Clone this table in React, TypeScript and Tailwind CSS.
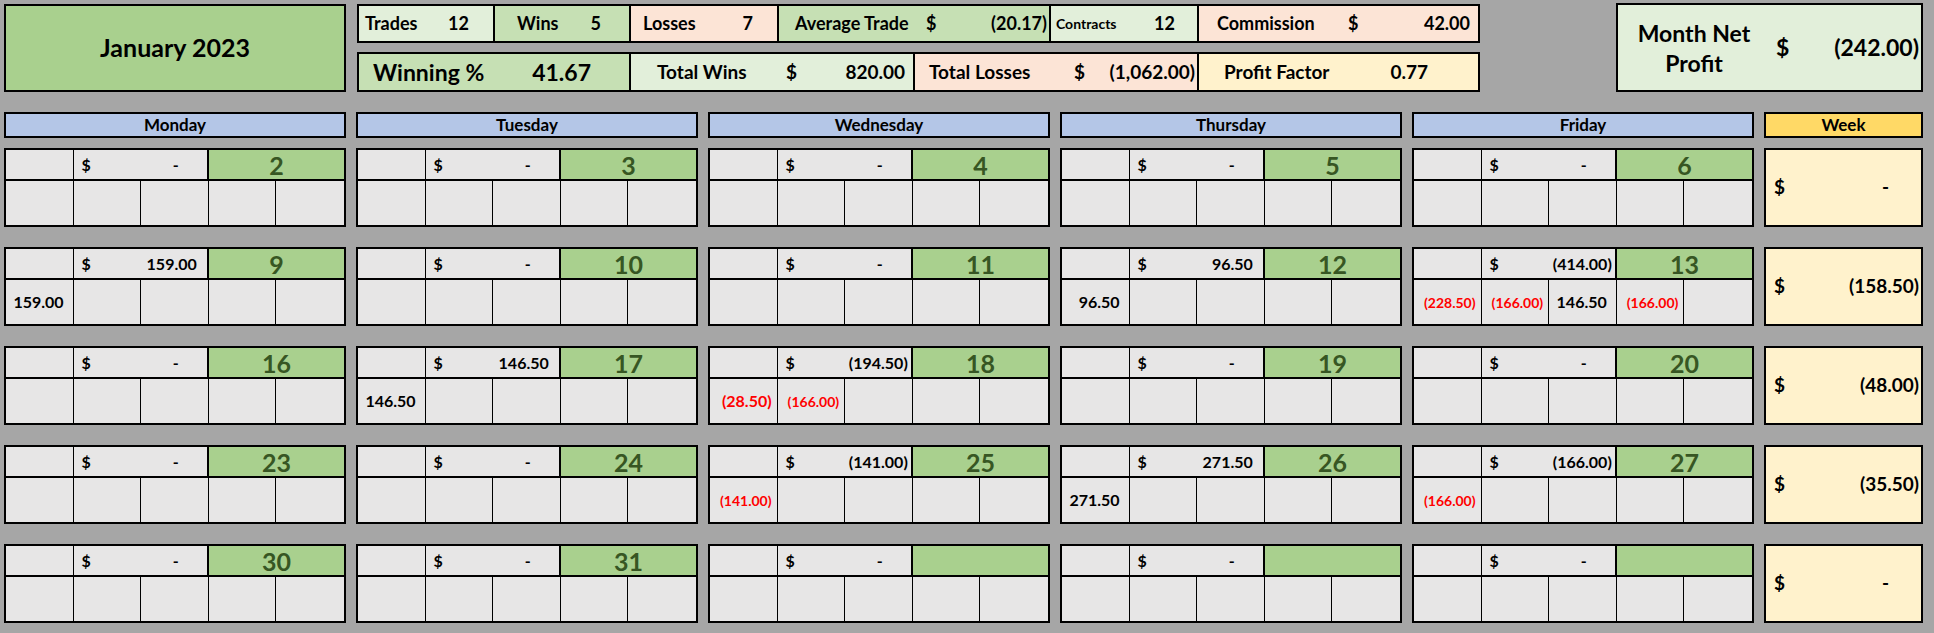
type Cell = { v: string; red?: boolean; small?: boolean } | null;
type Day = { d?: number; t?: string; cells?: Cell[] };
type Week = { days: Day[]; total: string };

const weeks: Week[] = [
	{ days: [{ d: 2 }, { d: 3 }, { d: 4 }, { d: 5 }, { d: 6 }], total: "-" },
	{
		days: [
			{ d: 9, t: "159.00", cells: [{ v: "159.00" }] },
			{ d: 10 },
			{ d: 11 },
			{ d: 12, t: "96.50", cells: [{ v: "96.50" }] },
			{
				d: 13,
				t: "(414.00)",
				cells: [
					{ v: "(228.50)", red: true, small: true },
					{ v: "(166.00)", red: true, small: true },
					{ v: "146.50" },
					{ v: "(166.00)", red: true, small: true },
				],
			},
		],
		total: "(158.50)",
	},
	{
		days: [
			{ d: 16 },
			{ d: 17, t: "146.50", cells: [{ v: "146.50" }] },
			{
				d: 18,
				t: "(194.50)",
				cells: [{ v: "(28.50)", red: true }, { v: "(166.00)", red: true, small: true }],
			},
			{ d: 19 },
			{ d: 20 },
		],
		total: "(48.00)",
	},
	{
		days: [
			{ d: 23 },
			{ d: 24 },
			{ d: 25, t: "(141.00)", cells: [{ v: "(141.00)", red: true, small: true }] },
			{ d: 26, t: "271.50", cells: [{ v: "271.50" }] },
			{ d: 27, t: "(166.00)", cells: [{ v: "(166.00)", red: true, small: true }] },
		],
		total: "(35.50)",
	},
	{ days: [{ d: 30 }, { d: 31 }, {}, {}, {}], total: "-" },
];

const dayNames = ["Monday", "Tuesday", "Wednesday", "Thursday", "Friday"];

// accounting-style padding: dash sits left of the decimals, ")" hangs right
function amountPad(v: string) {
	if (v === "-") return "pr-[28px]";
	if (v.startsWith("(")) return "pr-[3px]";
	return "pr-[10px]";
}

function DayBlock({ day }: { day: Day }) {
	const total = day.t ?? "-";
	const cells = day.cells ?? [];
	return (
		<div className="h-[79px] border-2 border-black bg-[#e7e6e6] grid grid-cols-5 grid-rows-[31px_1fr]">
			<div className="border-r border-b-2 border-black" />
			<div className="col-span-2 flex items-center border-r-2 border-b-2 border-black text-[16px]">
				<span className="pl-[8px]">$</span>
				<span className={`ml-auto ${amountPad(total)}`}>{total}</span>
			</div>
			<div className="col-span-2 flex items-center justify-center border-b-2 border-black bg-[#a9d08e] text-[25px] text-[#375623] leading-none pt-[1px]">
				{day.d ?? ""}
			</div>
			{[0, 1, 2, 3, 4].map((i) => {
				const c = cells[i];
				return (
					<div
						key={i}
						className={`flex items-center justify-end ${i < 4 ? "border-r border-black" : ""}`}
					>
						{c && (
							<span
								className={`${c.red ? "text-[#ff0000]" : "text-black"} ${
									c.small ? "text-[14px]" : "text-[16px]"
								} ${c.v.startsWith("(") ? "pr-[5px]" : "pr-[9px]"}`}
							>
								{c.v}
							</span>
						)}
					</div>
				);
			})}
		</div>
	);
}

function WeekBlock({ total }: { total: string }) {
	return (
		<div className="h-[79px] border-2 border-black bg-[#fff2cc] flex items-center text-[19px]">
			<span className="pl-[8px]">$</span>
			<span className={`ml-auto ${total === "-" ? "pr-[32px]" : "pr-[2px]"}`}>{total}</span>
		</div>
	);
}

export default function App() {
	return (
		<div className="w-[1934px] h-[633px] bg-[#a6a6a6] pl-[4px] pt-[4px] font-['Lato',sans-serif] font-bold text-black overflow-hidden">
			{/* Summary header */}
			<div className="flex items-start h-[88px]">
				<div className="w-[342px] h-[88px] border-2 border-black bg-[#a9d08e] flex items-center justify-center text-[25px]">
					January 2023
				</div>

				<div className="ml-[11px] w-[1123px] flex flex-col gap-[9px]">
					<div className="h-[39px] flex border-2 border-black text-[18px]">
						<div className="w-[134px] flex items-center bg-[#e2efda] pl-[6px]">
							<span>Trades</span>
							<span className="ml-auto pr-[24px]">12</span>
						</div>
						<div className="w-[136px] flex items-center bg-[#c6e0b4] border-l-2 border-black pl-[22px]">
							<span>Wins</span>
							<span className="ml-auto pr-[28px]">5</span>
						</div>
						<div className="w-[148px] flex items-center bg-[#fce4d6] border-l-2 border-black pl-[12px]">
							<span>Losses</span>
							<span className="ml-auto pr-[24px]">7</span>
						</div>
						<div className="w-[272px] flex items-center bg-[#c6e0b4] border-l-2 border-black pl-[16px]">
							<span className="w-[131px]">Average Trade</span>
							<span>$</span>
							<span className="ml-auto pr-[2px]">(20.17)</span>
						</div>
						<div className="w-[148px] flex items-center bg-[#e2efda] border-l-2 border-black pl-[5px]">
							<span className="text-[14px]">Contracts</span>
							<span className="ml-auto pr-[22px]">12</span>
						</div>
						<div className="flex-1 flex items-center bg-[#fce4d6] border-l-2 border-black pl-[18px]">
							<span className="w-[131px]">Commission</span>
							<span>$</span>
							<span className="ml-auto pr-[8px]">42.00</span>
						</div>
					</div>

					<div className="h-[40px] flex border-2 border-black text-[19px]">
						<div className="w-[270px] flex items-center bg-[#c6e0b4] pl-[14px] text-[23px]">
							<span>Winning %</span>
							<span className="ml-auto pr-[38px]">41.67</span>
						</div>
						<div className="w-[284px] flex items-center bg-[#e2efda] border-l-2 border-black pl-[26px]">
							<span className="w-[129px]">Total Wins</span>
							<span>$</span>
							<span className="ml-auto pr-[8px]">820.00</span>
						</div>
						<div className="w-[284px] flex items-center bg-[#fce4d6] border-l-2 border-black pl-[14px]">
							<span className="w-[145px]">Total Losses</span>
							<span>$</span>
							<span className="ml-auto pr-[2px]">(1,062.00)</span>
						</div>
						<div className="flex-1 flex items-center bg-[#fff2cc] border-l-2 border-black pl-[25px]">
							<span>Profit Factor</span>
							<span className="ml-auto pr-[50px]">0.77</span>
						</div>
					</div>
				</div>

				<div className="ml-[136px] -mt-[1px] w-[307px] h-[89px] border-2 border-black bg-[#e2efda] flex items-center text-[23px]">
					<span className="w-[152px] text-center leading-[30px]">
						Month Net
						<br />
						Profit
					</span>
					<span className="ml-[6px]">$</span>
					<span className="ml-auto pr-[2px]">(242.00)</span>
				</div>
			</div>

			{/* Calendar */}
			<div className="mt-[20px] grid grid-cols-[342px_342px_342px_342px_342px_159px] gap-x-[10px]">
				{dayNames.map((n) => (
					<div
						key={n}
						className="h-[26px] border-2 border-black bg-[#b4c6e7] flex items-center justify-center text-[17px]"
					>
						{n}
					</div>
				))}
				<div className="h-[26px] border-2 border-black bg-[#ffd966] flex items-center justify-center text-[17px]">
					Week
				</div>
			</div>

			<div className="mt-[10px] flex flex-col gap-[20px]">
				{weeks.map((w, wi) => (
					<div
						key={wi}
						className="grid grid-cols-[342px_342px_342px_342px_342px_159px] gap-x-[10px]"
					>
						{w.days.map((d, di) => (
							<DayBlock key={di} day={d} />
						))}
						<WeekBlock total={w.total} />
					</div>
				))}
			</div>
		</div>
	);
}
